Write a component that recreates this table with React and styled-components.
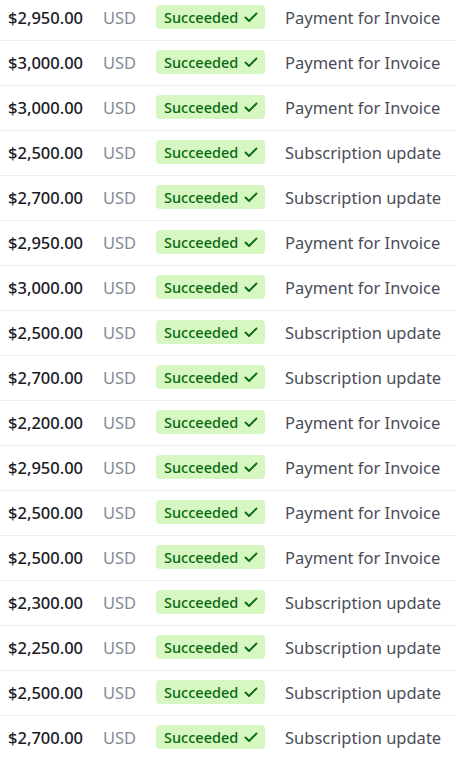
import React from 'react';
import styled, { createGlobalStyle } from 'styled-components';

const GlobalStyle = createGlobalStyle`
  html, body { margin: 0; padding: 0; background: #ffffff; }
  body { font-family: "Noto Sans", "Open Sans", sans-serif; overflow: hidden; }
`;

const rows = [
  ['$2,950.00', 'Payment for Invoice'],
  ['$3,000.00', 'Payment for Invoice'],
  ['$3,000.00', 'Payment for Invoice'],
  ['$2,500.00', 'Subscription update'],
  ['$2,700.00', 'Subscription update'],
  ['$2,950.00', 'Payment for Invoice'],
  ['$3,000.00', 'Payment for Invoice'],
  ['$2,500.00', 'Subscription update'],
  ['$2,700.00', 'Subscription update'],
  ['$2,200.00', 'Payment for Invoice'],
  ['$2,950.00', 'Payment for Invoice'],
  ['$2,500.00', 'Payment for Invoice'],
  ['$2,500.00', 'Payment for Invoice'],
  ['$2,300.00', 'Subscription update'],
  ['$2,250.00', 'Subscription update'],
  ['$2,500.00', 'Subscription update'],
  ['$2,700.00', 'Subscription update'],
];

// list is scrolled a few px, first row is cut at the top
const List = styled.div`
  margin-top: -4px;
`;

const Row = styled.div`
  display: grid;
  grid-template-columns: 95px 53px 129px 1fr;
  align-items: center;
  box-sizing: border-box;
  height: 45px;
  padding: 0 0 2px 8px;
  border-bottom: 1px solid #ebeef1;
`;

const Amount = styled.span`
  font-size: 16.5px;
  font-weight: 500;
  color: #1a1a1f;
`;

const Currency = styled.span`
  font-size: 16.5px;
  color: #858b97;
`;

const Badge = styled.span`
  display: inline-flex;
  align-items: center;
  gap: 5px;
  justify-self: start;
  height: 24px;
  padding: 0 6px 0 8px;
  border-radius: 4px;
  background: #d7f7c2;
  color: #05690d;
  font-size: 14.5px;
  font-weight: 500;
`;

const Description = styled.span`
  font-size: 16.5px;
  color: #4a4d58;
  white-space: nowrap;
`;

const Check = () => (
  <svg width="16" height="16" viewBox="0 0 16 16" fill="none">
    <path d="M2.5 8.5 L6 12 L13.5 4.5" stroke="#05690d" strokeWidth="1.8" strokeLinecap="round" strokeLinejoin="round" />
  </svg>
);

export default function App() {
  return (
    <>
      <GlobalStyle />
      <List>
        {rows.map(([amount, desc], i) => (
          <Row key={i}>
            <Amount>{amount}</Amount>
            <Currency>USD</Currency>
            <Badge>Succeeded<Check /></Badge>
            <Description>{desc}</Description>
          </Row>
        ))}
      </List>
    </>
  );
}
